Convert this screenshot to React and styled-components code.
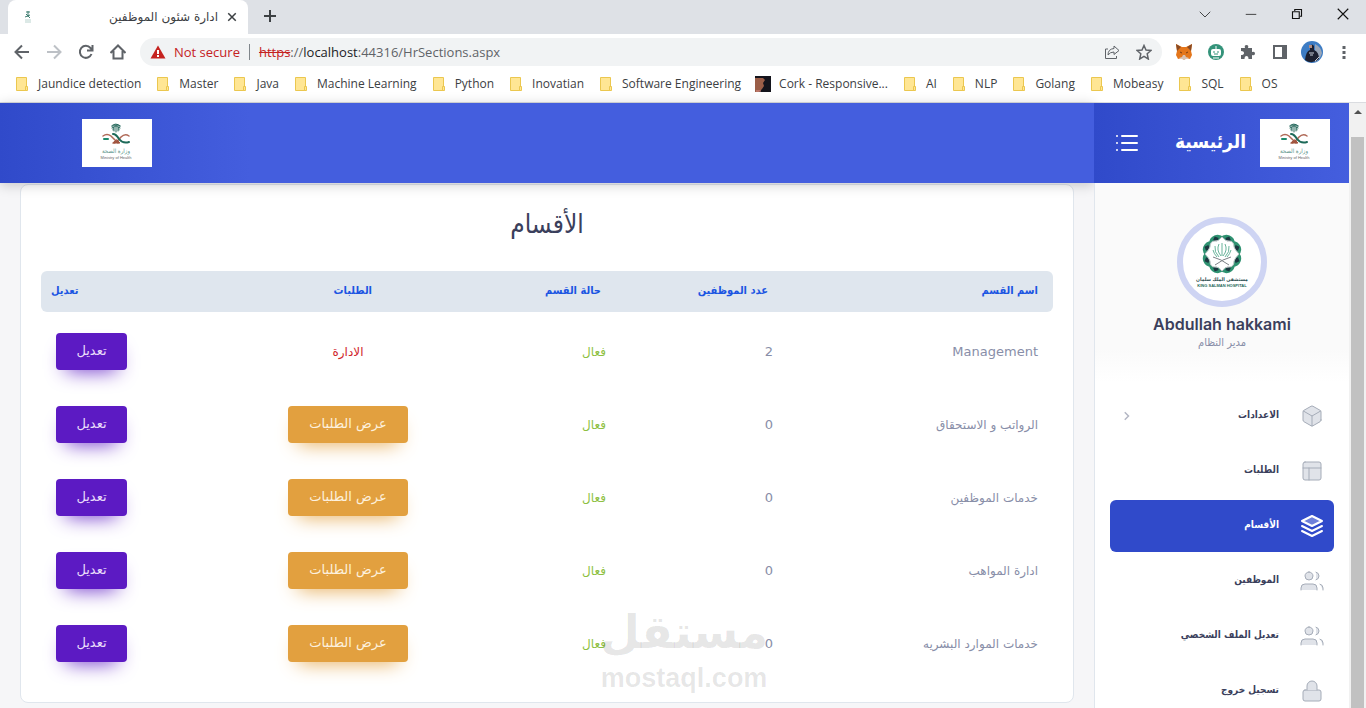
import React from 'react';
import styled, { createGlobalStyle } from 'styled-components';

const arabic = "'DejaVu Sans', sans-serif";
const arabicNarrow = "'DejaVu Sans Condensed', 'DejaVu Sans', sans-serif";

const GlobalStyle = createGlobalStyle`
  * {
    box-sizing: border-box;
  }
  body {
    margin: 0;
    overflow: hidden;
    background: #fff;
    font-family: 'Open Sans', 'DejaVu Sans', sans-serif;
  }
  button {
    font-family: inherit;
    border: 0;
    padding: 0;
    background: none;
    cursor: pointer;
  }
`;

const Window = styled.div`
  height: 100vh;
  display: flex;
  flex-direction: column;
  overflow: hidden;
`;

/* ---------- browser chrome ---------- */

const TabStrip = styled.div`
  height: 34px;
  flex: none;
  display: flex;
  background: #dee1e6;
  padding-left: 8px;
`;

const Tab = styled.div`
  width: 240px;
  display: flex;
  align-items: center;
  gap: 8px;
  padding: 0 10px 0 12px;
  background: #fff;
  border-radius: 8px 8px 0 0;
`;

const TabTitle = styled.span`
  flex: 1;
  font: 12px/16px ${arabic};
  color: #3c4043;
  text-align: right;
  direction: rtl;
  white-space: nowrap;
`;

const IconButton = styled.button`
  width: ${({ $w }) => $w || 32}px;
  height: ${({ $h }) => $h || 32}px;
  flex: none;
  display: flex;
  align-items: center;
  justify-content: center;
  color: ${({ $color }) => $color || '#5f6368'};
`;

const WindowControls = styled.div`
  margin-left: auto;
  display: flex;
  height: 28px;
`;

const Toolbar = styled.div`
  height: 36px;
  flex: none;
  display: flex;
  align-items: center;
  padding: 0 6px;
`;

const AddressBar = styled.div`
  flex: 1;
  height: 28px;
  margin: 0 6px;
  padding: 0 2px 0 10px;
  display: flex;
  align-items: center;
  background: #f1f3f4;
  border-radius: 14px;
  font-size: 13px;
  line-height: 20px;
  color: #5f6368;
`;

const NotSecure = styled.span`
  margin-left: 8px;
  padding-right: 9px;
  margin-right: 9px;
  line-height: 16px;
  border-right: 1px solid #80868b;
  color: #c5221f;
`;

const Address = styled.label`
  flex: 1;
  display: flex;
`;

const Scheme = styled.span`
  color: #c5221f;
  text-decoration: line-through;
`;

const Host = styled.span`
  color: #202124;
`;

const AddressInput = styled.input`
  flex: 1;
  min-width: 0;
  padding: 0;
  border: 0;
  outline: 0;
  background: transparent;
  font: inherit;
  line-height: 20px;
  color: inherit;
`;

const Bookmarks = styled.nav`
  height: 33px;
  flex: none;
  display: flex;
  align-items: center;
  gap: 14px;
  padding: 0 14px 4px;
  border-bottom: 1px solid #dadce0;
`;

const Bookmark = styled.a`
  display: flex;
  align-items: center;
  gap: 8px;
  font-size: 12px;
  line-height: 16px;
  color: #3c4043;
  text-decoration: none;
  white-space: nowrap;
`;

/* ---------- page ---------- */

const Page = styled.div`
  flex: 1;
  min-height: 0;
  display: flex;
  background: #f6f6f8;
`;

const Content = styled.main`
  flex: 1;
  min-width: 0;
`;

const TopBar = styled.header`
  height: 80px;
  display: flex;
  align-items: center;
  padding-left: 82px;
  position: relative;
  background: linear-gradient(to right, #304aca 0, #445ede 250px);
  box-shadow: 0 2px 12px rgba(0, 0, 0, 0.2);
`;

const LogoBox = styled.a`
  width: 70px;
  height: 48px;
  flex: none;
  display: block;
  background: #fff;
`;

const Card = styled.section`
  margin: 1px 20px 0;
  padding: 20px 20px 25px;
  background: #fff;
  border: 1px solid #e0e6ed;
  border-radius: 8px;
`;

const Title = styled.h2`
  margin: 0 0 28px;
  font: 400 26px/38px ${arabicNarrow};
  color: #3b3f5c;
  text-align: center;
`;

const Table = styled.table`
  width: 100%;
  table-layout: fixed;
  border-collapse: separate;
  border-spacing: 0;
  color: #888ea8;
`;

const HeadCell = styled.th`
  height: 41px;
  width: ${({ $width }) => $width || 'auto'};
  padding: 0 ${({ $end }) => $end || 20}px 1px 10px;
  background: #dfe6ee;
  font: 700 11px/20px ${arabicNarrow};
  color: #1b55e2;
  text-align: ${({ $align }) => $align || 'right'};

  &:first-child {
    border-radius: 0 6px 6px 0;
  }
  &:last-child {
    border-radius: 6px 0 0 6px;
  }
`;

const Cell = styled.td`
  height: 73px;
  padding: 6px 15px 0;
  font: ${({ $latin }) => ($latin ? 13 : 12)}px/20px ${arabic};
  text-align: right;
`;

const Status = styled.span`
  color: #8dbf42;
`;

const Centered = styled.div`
  width: 120px;
  text-align: center;
  color: #d0252b;
`;

const ActionButton = styled.button`
  display: block;
  width: ${({ $wide }) => ($wide ? '120px' : '71px')};
  height: 37px;
  padding-bottom: 2px;
  border-radius: 4px;
  font: 13px/18px ${arabic};
  color: ${({ $wide }) => ($wide ? '#fdf1de' : '#e9dcfa')};
  background: ${({ $wide }) => ($wide ? '#e2a03f' : '#5c1ac3')};
  box-shadow: 0 10px 20px -10px ${({ $wide }) => ($wide ? '#e2a03f' : '#5c1ac3')};
`;

const Watermark = styled.div`
  position: absolute;
  left: 600px;
  top: 600px;
  display: flex;
  flex-direction: column;
  align-items: center;
  color: rgba(0, 0, 0, 0.1);
  font: 700 27px/28px 'Liberation Sans', sans-serif;
  pointer-events: none;
`;

const WatermarkName = styled.span`
  font: 700 46px/64px ${arabic};
`;

/* ---------- sidebar ---------- */

const Sidebar = styled.aside`
  width: 255px;
  flex: none;
  position: relative;
  border-left: 1px solid #e0e6ed;
  background: #fff;
`;

const SideHead = styled.div`
  height: 80px;
  margin-left: -1px;
  display: flex;
  align-items: center;
  padding: 0 19px 0 21px;
  background: linear-gradient(to right, #304aca, #445ede);
`;

const HomeLink = styled.a`
  margin: 0 14px 4px auto;
  font: 700 19px/32px ${arabicNarrow};
  color: #fff;
  text-decoration: none;
`;

const Profile = styled.div`
  height: 207px;
  padding-top: 34px;
  display: flex;
  flex-direction: column;
  align-items: center;
  background: linear-gradient(#fafafa 80%, #fff 96%);
`;

const Avatar = styled.div`
  width: 90px;
  height: 90px;
  border: 6px solid #ced4f3;
  border-radius: 50%;
  background: #fff;
  overflow: hidden;
`;

const UserName = styled.h6`
  margin: 6px 0 0;
  font: 600 16px/22px Inter, sans-serif;
  color: #3b3f5c;
`;

const UserRole = styled.p`
  margin: 0;
  font: 11px/16px ${arabicNarrow};
  color: #888ea8;
`;

const Menu = styled.nav`
  padding: 0 15px;
  display: flex;
  flex-direction: column;
  gap: 3px;
`;

const MenuItem = styled.a`
  height: 52px;
  flex: none;
  display: flex;
  flex-direction: row-reverse;
  align-items: center;
  gap: 21px;
  padding: 0 10px 0 11px;
  border-radius: 6px;
  text-decoration: none;
  background: ${({ $active }) => ($active ? '#304aca' : 'transparent')};
  color: ${({ $active }) => ($active ? '#fff' : '#3b3f5c')};
`;

const MenuIcon = styled.svg`
  flex: none;
  stroke: ${({ $active }) => ($active ? '#fff' : '#a5acb8')};
  stroke-width: ${({ $active }) => ($active ? 2 : 1)};
  stroke-linecap: round;
  stroke-linejoin: round;
  fill: ${({ $active }) => ($active ? 'rgba(255, 255, 255, 0.3)' : '#e0e3e9')};
`;

const Chevron = styled.svg`
  flex: none;
  fill: none;
  stroke: #b4b7c4;
  stroke-width: 2;
`;

const MenuLabel = styled.span`
  flex: 1;
  padding-bottom: 3px;
  font: 700 10px/18px ${arabicNarrow};
  direction: rtl;
`;

const Scrollbar = styled.div`
  width: 17px;
  flex: none;
  display: flex;
  flex-direction: column;
  align-items: center;
  background: #f1f1f1;
`;

const ScrollThumb = styled.div`
  width: 13px;
  flex: 1;
  margin-top: 17px;
  background: #c1c1c1;
`;

const bookmarks = [
  'Jaundice detection', 'Master', 'Java', 'Machine Learning', 'Python', 'Inovatian',
  'Software Engineering', 'Cork - Responsive...', 'AI', 'NLP', 'Golang', 'Mobeasy', 'SQL', 'OS',
];

const sections = [
  { name: 'Management', count: 2, latin: true },
  { name: 'الرواتب و الاستحقاق', count: 0 },
  { name: 'خدمات الموظفين', count: 0 },
  { name: 'ادارة المواهب', count: 0 },
  { name: 'خدمات الموارد البشريه', count: 0 },
];

const icons = {
  box: [
    'M21 16V8a2 2 0 0 0-1-1.730l-7-4a2 2 0 0 0-2 0l-7 4A2 2 0 0 0 3 8v8a2 2 0 0 0 1 1.730l7 4a2 2 0 0 0 2 0l7-4A2 2 0 0 0 21 16z',
    'M3.270 6.960 12 12l8.730-5.040',
    'M12 22V12',
  ],
  layout: ['M5 3h14a2 2 0 0 1 2 2v14a2 2 0 0 1-2 2H5a2 2 0 0 1-2-2V5a2 2 0 0 1 2-2z', 'M3 9h18', 'M9 21V9'],
  layers: ['M12 2 2 7l10 5 10-5z'],
  users: [
    'M17 21v-2a4 4 0 0 0-4-4H5a4 4 0 0 0-4 4v2',
    'M9 3a4 4 0 1 0 0 8 4 4 0 0 0 0-8z',
    'M23 21v-2a4 4 0 0 0-3-3.870',
    'M16 3.130a4 4 0 0 1 0 7.750',
  ],
  lock: ['M5 11h14a2 2 0 0 1 2 2v7a2 2 0 0 1-2 2H5a2 2 0 0 1-2-2v-7a2 2 0 0 1 2-2z', 'M7 11V7a5 5 0 0 1 10 0v4'],
};

const menu = [
  { label: 'الاعدادات', icon: 'box', nested: true },
  { label: 'الطلبات', icon: 'layout' },
  { label: 'الأقسام', icon: 'layers', active: true },
  { label: 'الموظفين', icon: 'users' },
  { label: 'تعديل الملف الشخصي', icon: 'users' },
  { label: 'تسجيل خروج', icon: 'lock' },
];

const Folder = () => (
  <svg width="16" height="16" viewBox="0 0 16 16">
    <path d="M2.500 1.500h10v13h-10z" fill="#ffe694" stroke="#ebc74f" />
    <path d="M11.500 10.500h2v4h-2z" fill="#ffe694" stroke="#ebc74f" />
  </svg>
);

const CorkIcon = () => (
  <svg width="16" height="16" viewBox="0 0 16 16">
    <path d="M0 0h16v16H0z" fill="#14141c" />
    <path d="M0 2h8l2 2-2 3 1 3-2 3-3 3H0z" fill="#9b5e48" />
    <path d="M1 15h5" stroke="#d98c86" />
  </svg>
);

const MinistryLogo = () => (
  <LogoBox href="#" aria-label="Ministry of Health">
    <svg width="70" height="48" viewBox="0 0 70 48">
      <g fill="none" strokeLinecap="round" strokeWidth="1.500">
        <path d="M30 9q1-4 4-3 3-1 4 3M31 11q0-4 3-4t3 4M29.500 7q4-4 9 0M34 6v7M32 8v4M36 8v4" stroke="#27695d" strokeWidth="1" />
        <path d="M21 17q4-3 8 0l7 7" stroke="#b06a58" />
        <path d="M47 17q-4-3-8 1-4 5-7 6" stroke="#b06a58" />
        <path d="M31 24h7l-3-3z" fill="#a0543f" stroke="#a0543f" strokeWidth="1" />
        <path d="M31 15q3 0 6 5 4 5 10 3" stroke="#1d6a59" strokeWidth="2" />
        <path d="M22 20h4" stroke="#1d8a6b" strokeWidth="2" />
      </g>
      <text x="34" y="34" fontSize="6" textAnchor="middle" fill="#5c968b" fontFamily="DejaVu Sans Condensed">وزارة الصحة</text>
      <text x="34" y="40" fontSize="4" textAnchor="middle" fill="#666" fontFamily="Liberation Sans">Ministry of Health</text>
    </svg>
  </LogoBox>
);

const HospitalLogo = () => (
  <svg width="78" height="78" viewBox="0 0 78 78">
    <g transform="translate(39 31)">
      {[0, 45, 90, 135, 180, 225, 270, 315].map((angle) => (
        <g key={angle} transform={`rotate(${angle + 22.500})`}>
          <path d="M-8-14Q-6-20 0-20T8-14L0-11z" fill="#2f9271" />
          <path d="M0-19 3-16 0-13-3-16z" fill="#1b3840" />
        </g>
      ))}
      <path d="M0-17Q4-12 7-13 12-13 12-7 13-4 17 0 13 4 12 7 12 13 7 13 4 12 0 17-4 12-7 13-12 13-12 7-13 4-17 0-13-4-12-7-12-13-7-13-4-12 0-17z" fill="#fff" stroke="#c3c6ca" strokeWidth="1" />
      <path d="M0-11V2M-3-10Q-6-4-1 2M3-10Q6-4 1 2M-7-8Q-8-2-3 3M7-8Q8-2 3 3M-9-4Q-8 0-5 3M9-4Q8 0 5 3" fill="none" stroke="#69b39a" />
      <path d="M-9 3Q-1 5 7 11M9 3Q1 5-7 11" fill="none" stroke="#7d8287" />
    </g>
    <text x="39" y="58" fontSize="5" fontWeight="700" textAnchor="middle" fill="#27474a" fontFamily="DejaVu Sans Condensed">مستشفى الملك سلمان</text>
    <text x="39" y="64" fontSize="4" fontWeight="700" textAnchor="middle" fill="#1f6b5c" fontFamily="Liberation Sans">KING SALMAN HOSPITAL</text>
  </svg>
);

const Glyph = ({ d, size = 16, width = 2, fill = 'none' }) => (
  <svg width={size} height={size} viewBox="0 0 16 16" fill={fill} stroke="currentColor" strokeWidth={width}>
    <path d={d} />
  </svg>
);

const Browser = () => (
  <>
    <TabStrip>
      <Tab>
        <svg width="16" height="16" viewBox="0 0 16 16">
          <path d="M6 3h4M8 2v6M5 8l5-2M6 5l4 4" stroke="#3d7d70" />
          <path d="M5 11h6M5 13h6" stroke="#b9d3ce" />
        </svg>
        <TabTitle>ادارة شئون الموظفين</TabTitle>
        <IconButton $w={12} $h={16} $color="#3c4043" aria-label="Close tab">
          <Glyph size={12} d="m3 3 10 10M13 3 3 13" />
        </IconButton>
      </Tab>
      <IconButton $w={44} $color="#3c4043" aria-label="New tab">
        <Glyph d="M8 2v12M2 8h12" />
      </IconButton>
      <WindowControls>
        <IconButton $w={46} $h={28} $color="#111" aria-label="Search tabs">
          <Glyph size={12} width={1} d="m1 5 7 7 7-7" />
        </IconButton>
        <IconButton $w={46} $h={28} $color="#111" aria-label="Minimize">
          <Glyph size={12} width={1} d="M1 8.500h14" />
        </IconButton>
        <IconButton $w={46} $h={28} $color="#111" aria-label="Restore">
          <Glyph size={12} d="M2 5h9v9H2zM5 4V2h9v9h-2" width={1.500} />
        </IconButton>
        <IconButton $w={46} $h={28} $color="#111" aria-label="Close">
          <Glyph size={12} width={1.500} d="m1 1 14 14M15 1 1 15" />
        </IconButton>
      </WindowControls>
    </TabStrip>
    <Toolbar>
      <IconButton aria-label="Back"><Glyph d="M15 8H2M8 1.500 1.500 8 8 14.500" /></IconButton>
      <IconButton $color="#bdc1c6" aria-label="Forward"><Glyph d="M1 8h13M8 1.500 14.500 8 8 14.500" /></IconButton>
      <IconButton aria-label="Reload"><Glyph d="M13.500 10A6 6 0 1 1 12.500 4L14 6M14.500 1v5.500H9" /></IconButton>
      <IconButton aria-label="Home"><Glyph d="M.500 9 8 1.500 15.500 9M3.500 7v7.500h9V7" /></IconButton>
      <AddressBar>
        <svg width="16" height="16" viewBox="0 0 16 16">
          <path d="M8 1.500 15.500 14.500H.5z" fill="#c5221f" />
          <path d="M8 6v4M8 11v2" stroke="#fff" strokeWidth="2" />
        </svg>
        <NotSecure>Not secure</NotSecure>
        <Address>
          <Scheme>https</Scheme>://<Host>localhost</Host>
          <AddressInput aria-label="Address" defaultValue=":44316/HrSections.aspx" />
        </Address>
        <IconButton aria-label="Share">
          <Glyph width={1} d="M4 5H1.500v9.500h11V12M10 2l5 4.500-5 4V8Q6 8 4 11q0-6 6-6.500z" />
        </IconButton>
        <IconButton aria-label="Bookmark this tab">
          <Glyph width={1.500} d="m8 1.500 2 4.500 5 .5-3.800 3.300L12.300 15 8 12.300 3.700 15l1.100-5.200L1 6.500 6 6z" />
        </IconButton>
      </AddressBar>
      <IconButton aria-label="MetaMask">
        <svg width="18" height="18" viewBox="0 0 18 18">
          <path d="m1 1 6 3h4l6-3-1 7 1 4-2 4-4-1-2 2-2-2-4 1-2-4 1-4z" fill="#e4761b" />
          <path d="m1 1 5 3-4 4zM17 1l-5 3 4 4z" fill="#8a4a23" />
          <path d="m4 15 3-1 1-2h2l1 2 3 1-3 1-2 1-2-1z" fill="#d7c1b3" />
          <path d="m5 9 2 1M13 9l-2 1" stroke="#763d16" />
        </svg>
      </IconButton>
      <IconButton aria-label="Assistant">
        <svg width="16" height="16" viewBox="0 0 16 16">
          <circle cx="8" cy="8" r="8" fill="#34937a" />
          <rect x="3" y="5" width="10" height="7" rx="2" fill="#fff" />
          <path d="M8 2v3M5 14h6" stroke="#fff" />
          <path d="M5 8h2M9 8h2M6 10h4" stroke="#34937a" />
        </svg>
      </IconButton>
      <IconButton aria-label="Extensions">
        <Glyph fill="currentColor" width={0} d="M1 4h4q-1-3 1.500-3T8 4h4v4q3-1 3 1.500T12 11v4H8.500q0-3-2-3t-2 3H1v-4q3 0 3-2T1 7z" />
      </IconButton>
      <IconButton aria-label="Side panel">
        <Glyph d="M2 2h12v12H2zM11 2v12M12 2v12" />
      </IconButton>
      <IconButton aria-label="Profile">
        <svg width="22" height="22" viewBox="0 0 22 22">
          <circle cx="11" cy="11" r="11" fill="#3d7cc4" />
          <path d="M14 3q6 3 7 9-2 7-7 9z" fill="#9aa6b8" />
          <path d="M4 19q1-9 5-10V5q2-3 4 0v4q5 2 5 9-7 6-14 1z" fill="#1d2030" />
          <path d="M8 4h3v3H8z" fill="#b58c7e" />
          <path d="M8 12h5M9 14h3M14 20l4-4" stroke="#c9ced8" />
        </svg>
      </IconButton>
      <IconButton aria-label="Menu">
        <Glyph fill="currentColor" width={0} d="M6.500 2h3v3h-3zM6.500 7h3v3h-3zM6.500 12h3v3h-3z" />
      </IconButton>
    </Toolbar>
    <Bookmarks>
      {bookmarks.map((name) => (
        <Bookmark key={name} href="#">
          {name.startsWith('Cork') ? <CorkIcon /> : <Folder />}
          {name}
        </Bookmark>
      ))}
    </Bookmarks>
  </>
);

const SectionsTable = () => (
  <Table dir="rtl">
    <thead>
      <tr>
        <HeadCell $end={15}>اسم القسم</HeadCell>
        <HeadCell $width="167px">عدد الموظفين</HeadCell>
        <HeadCell $width="198px">حالة القسم</HeadCell>
        <HeadCell $width="281px" $end={51}>الطلبات</HeadCell>
        <HeadCell $width="101px" $align="left">تعديل</HeadCell>
      </tr>
    </thead>
    <tbody>
      {sections.map(({ name, count, latin }) => (
        <tr key={name}>
          <Cell $latin={latin}>{name}</Cell>
          <Cell $latin>{count}</Cell>
          <Cell><Status>فعال</Status></Cell>
          <Cell>
            {latin ? <Centered>الادارة</Centered> : <ActionButton $wide>عرض الطلبات</ActionButton>}
          </Cell>
          <Cell><ActionButton>تعديل</ActionButton></Cell>
        </tr>
      ))}
    </tbody>
  </Table>
);

const SideNav = () => (
  <Sidebar>
    <SideHead>
      <IconButton $w={24} $h={24} $color="#fff" aria-label="Toggle menu">
        <svg width="24" height="24" viewBox="0 0 24 24" stroke="currentColor" strokeWidth="2" strokeLinecap="round">
          <path d="M7 5h15M7 12h15M7 19h15M2 5h0M2 12h0M2 19h0" />
        </svg>
      </IconButton>
      <HomeLink href="#">الرئيسية</HomeLink>
      <MinistryLogo />
    </SideHead>
    <Profile>
      <Avatar><HospitalLogo /></Avatar>
      <UserName>Abdullah hakkami</UserName>
      <UserRole>مدير النظام</UserRole>
    </Profile>
    <Menu>
      {menu.map(({ label, icon, active, nested }) => (
        <MenuItem key={label} href="#" $active={active}>
          <MenuIcon $active={active} width="24" height="24" viewBox="0 0 24 24">
            {icons[icon].map((d) => <path key={d} d={d} />)}
            {icon === 'layers' && <path d="m2 12 10 5 10-5M2 17l10 5 10-5" fill="none" />}
          </MenuIcon>
          <MenuLabel>{label}</MenuLabel>
          {nested && (
            <Chevron width="12" height="12" viewBox="0 0 16 16">
              <path d="m5 3 5 5-5 5" />
            </Chevron>
          )}
        </MenuItem>
      ))}
    </Menu>
  </Sidebar>
);

const App = () => (
  <Window>
    <GlobalStyle />
    <Browser />
    <Page>
      <Content>
        <TopBar><MinistryLogo /></TopBar>
        <Card>
          <Title>الأقسام</Title>
          <SectionsTable />
        </Card>
      </Content>
      <SideNav />
      <Scrollbar>
        <svg width="17" height="17" viewBox="0 0 17 17">
          <path d="m5 11 4-4 4 4z" fill="#505050" />
        </svg>
        <ScrollThumb />
      </Scrollbar>
    </Page>
    <Watermark>
      <WatermarkName>مستقل</WatermarkName>
      mostaql.com
    </Watermark>
  </Window>
);

export default App;
